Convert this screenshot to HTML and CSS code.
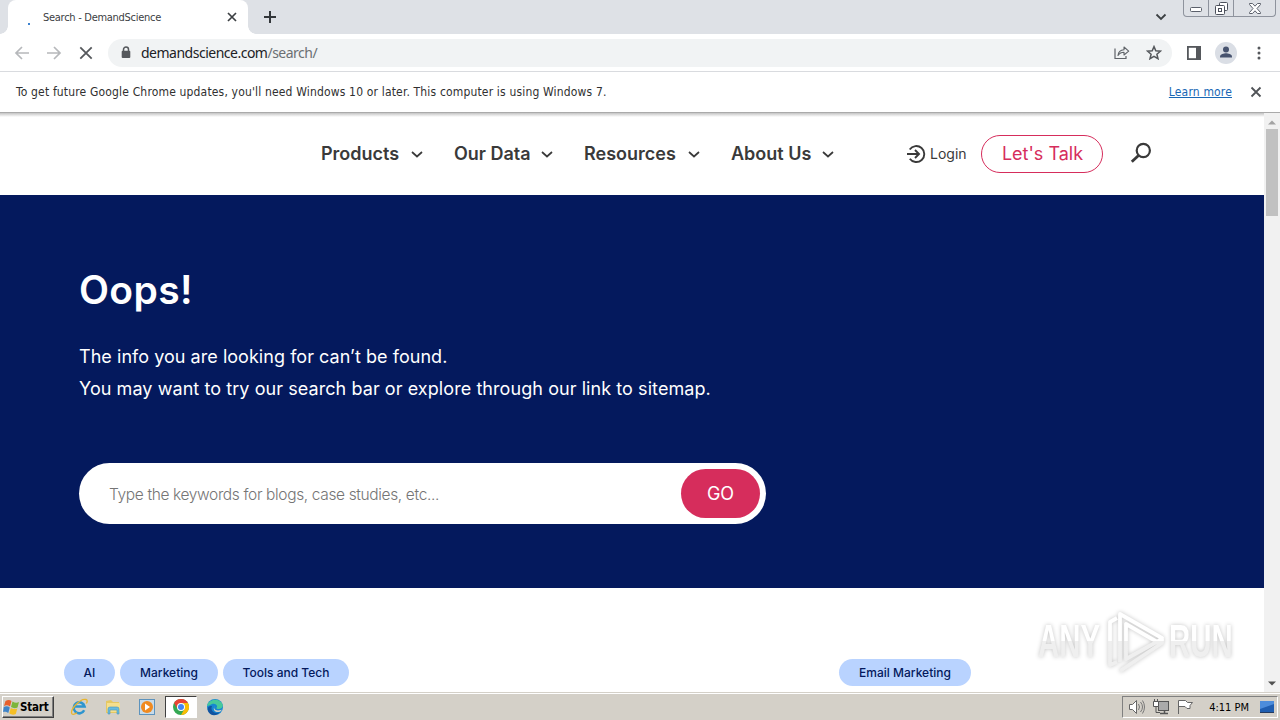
FILE: index.html
```html
<!DOCTYPE html>
<html lang="en">
<head>
    <meta charset="UTF-8">
    <meta name="viewport" content="width=device-width, initial-scale=1.0">
    <title>Search - DemandScience</title>
    <link rel="stylesheet" href="styles.css">
</head>
<body>
    <!-- Browser chrome -->
    <div class="tab-strip">
        <div class="tab-edge left"></div>
        <div class="tab">
            <span class="spinner"></span>
            <span class="tab-title">Search - DemandScience</span>
            <svg class="tab-close" width="10" height="10" viewBox="0 0 10 10"><path d="M1 1l8 8M9 1L1 9" stroke="#3c4043" stroke-width="1.7"/></svg>
        </div>
        <div class="tab-edge right"></div>
        <svg class="new-tab" width="14" height="14" viewBox="0 0 14 14"><path d="M7 1v12M1 7h12" stroke="#33373b" stroke-width="2"/></svg>
        <svg class="tab-search" width="12" height="8" viewBox="0 0 12 8"><path d="M1.5 1.5L6 6l4.5-4.5" fill="none" stroke="#3c4043" stroke-width="1.8"/></svg>
        <div class="window-buttons">
            <span class="win-min"><svg width="13" height="6" viewBox="0 0 13 6"><rect x=".5" y=".5" width="11" height="4" rx="1" fill="#fff" stroke="#5b606b"/></svg></span>
            <span class="win-max"><svg width="13" height="13" viewBox="0 0 13 13"><g fill="#fff" stroke="#4b505b"><rect x="4.5" y=".5" width="8" height="8" rx="1"/><rect x=".5" y="3.5" width="9" height="9" rx="1"/><rect x="3.5" y="6.5" width="3" height="3"/></g></svg></span>
            <span class="win-close"><svg width="12" height="11" viewBox="0 0 12 11"><path d="M.5.5h3L6 3.200 8.500.5h3v1L8 5.500l3.500 4v1h-3L6 7.800 3.500 10.500h-3v-1L4 5.500.5 1.500z" fill="#fff" stroke="#5b606b"/></svg></span>
        </div>
    </div>

    <div class="toolbar">
        <svg class="back" width="16" height="14" viewBox="0 0 16 14"><path d="M15 7H2M8 1L2 7l6 6" fill="none" stroke="#b6b8bb" stroke-width="1.7"/></svg>
        <svg class="forward" width="16" height="14" viewBox="0 0 16 14"><path d="M0 7h13M7 1l6 6-6 6" fill="none" stroke="#b6b8bb" stroke-width="1.7"/></svg>
        <svg class="stop" width="14" height="14" viewBox="0 0 14 14"><path d="M1.3 1.3l11.4 11.4M12.7 1.3L1.3 12.7" stroke="#55585c" stroke-width="1.8"/></svg>
        <div class="address-bar">
            <svg class="lock" width="10" height="13" viewBox="0 0 10 13"><path d="M2.5 6V3.500a2.500 2.500 0 015 0V6" fill="none" stroke="#55585c" stroke-width="1.5"/><rect x=".7" y="4.8" width="8.600" height="7.2" rx="1" fill="#55585c"/></svg>
            <span class="url">demandscience.com<span>/search/</span></span>
            <svg class="share" width="16" height="15" viewBox="0 0 16 15"><path d="M1 3.500v10h11V11" fill="none" stroke="#5f6368" stroke-width="1.2"/><path d="M4 10.500c.4-3.700 2.300-5.500 6-5.700V2l4.700 4.100L10 10V7.300c-2.700 0-4.500.9-6 3.200z" fill="none" stroke="#5f6368" stroke-width="1.1" stroke-linejoin="round"/></svg>
            <svg class="star" width="16" height="15" viewBox="0 0 16 15"><path d="M8 1.600l1.800 4.200 4.600.4-3.500 3 1.100 4.500L8 11.300l-4 2.400 1.100-4.500-3.500-3 4.600-.4z" fill="none" stroke="#55585c" stroke-width="1.5"/></svg>
        </div>
        <svg class="side-panel" width="14" height="14" viewBox="0 0 14 14"><rect x=".9" y=".9" width="12.2" height="12.2" fill="#fff" stroke="#55585c" stroke-width="1.8"/><path d="M9 1h4v12H9z" fill="#55585c"/></svg>
        <svg class="profile" width="22" height="22" viewBox="0 0 22 22"><circle cx="11" cy="11" r="11" fill="#dadee5"/><circle cx="11" cy="7.5" r="3" fill="#47536f"/><path d="M5 15.500v-1c0-2.300 4-3.200 6-3.200s6 .9 6 3.200v1z" fill="#47536f"/></svg>
        <svg class="menu" width="4" height="14" viewBox="0 0 4 14"><g fill="#55585c"><circle cx="2" cy="2" r="1.5"/><circle cx="2" cy="7" r="1.5"/><circle cx="2" cy="12" r="1.5"/></g></svg>
    </div>

    <div class="infobar">
        <span class="info-text">To get future Google Chrome updates, you'll need Windows 10 or later. This computer is using Windows 7.</span>
        <a class="learn-more">Learn more</a>
        <svg width="12" height="12" viewBox="0 0 12 12"><path d="M1.5 1.5l9 9M10.5 1.5l-9 9" stroke="#505357" stroke-width="1.8"/></svg>
    </div>

    <!-- Web page -->
    <div class="viewport">
        <div class="page">
            <header class="site-header">
                <nav class="main-nav">
                    <div class="nav-item products"><span>Products</span><svg width="12" height="7" viewBox="0 0 12 7"><path d="M1 1l5 4.500L11 1"/></svg></div>
                    <div class="nav-item data"><span>Our Data</span><svg width="12" height="7" viewBox="0 0 12 7"><path d="M1 1l5 4.500L11 1"/></svg></div>
                    <div class="nav-item resources"><span>Resources</span><svg width="12" height="7" viewBox="0 0 12 7"><path d="M1 1l5 4.500L11 1"/></svg></div>
                    <div class="nav-item about"><span>About Us</span><svg width="12" height="7" viewBox="0 0 12 7"><path d="M1 1l5 4.500L11 1"/></svg></div>
                </nav>
                <div class="login">
                    <svg width="19" height="20" viewBox="0 0 19 20"><path d="M2.700 5.500a8 8 0 11.1 9.200M0 10h12M8 6l4 4-4 4" fill="none" stroke="#3a3a3a" stroke-width="1.9"/></svg>
                    <span>Login</span>
                </div>
                <button class="talk-btn">Let's Talk</button>
                <svg class="search-icon" width="22" height="22" viewBox="0 0 22 22"><circle cx="13.3" cy="8.5" r="6.6" fill="none" stroke="#3a3a3a" stroke-width="2.2"/><path d="M8.500 13.500l-6.700 6.300" stroke="#3a3a3a" stroke-width="2.8"/></svg>
            </header>

            <section class="hero">
                <h1>Oops!</h1>
                <p class="line-one">The info you are looking for can’t be found.</p>
                <p class="line-two">You may want to try our search bar or explore through our link to sitemap.</p>
                <form class="search-form">
                    <input type="text" placeholder="Type the keywords for blogs, case studies, etc...">
                    <button type="button">GO</button>
                </form>
            </section>

            <section class="cards">
                <div class="tags">
                    <span class="tag tag-ai">AI</span>
                    <span class="tag tag-marketing">Marketing</span>
                    <span class="tag tag-tools">Tools and Tech</span>
                </div>
                <div class="tags">
                    <span class="tag tag-email">Email Marketing</span>
                </div>
            </section>

            <div class="watermark">
                <span>ANY</span>
                <svg width="60" height="66" viewBox="0 0 60 66">
                    <defs>
                        <linearGradient id="fade" gradientUnits="userSpaceOnUse" x1="0" y1="0" x2="0" y2="66">
                            <stop offset=".5" stop-color="#fff"/>
                            <stop offset=".5" stop-color="#efefef"/>
                        </linearGradient>
                    </defs>
                    <g fill="none" stroke="url(#fade)" stroke-width="3.8" stroke-linejoin="round"><path d="M11 10l-7 4v43l7-3"/><path d="M14 54V6l42 24-3 5-33-19v35l36-20v4L14 63"/></g>
                </svg>
                <span>RUN</span>
            </div>
        </div>
        <div class="scrollbar">
            <svg width="8" height="5" viewBox="0 0 8 5"><path d="M0 4.500L4 .5l4 4z" fill="#a3a3a3"/></svg>
            <div class="thumb"></div>
            <svg class="down" width="8" height="5" viewBox="0 0 8 5"><path d="M0 .5l4 4 4-4z" fill="#505050"/></svg>
        </div>
    </div>

    <div class="taskbar">
        <div class="start">
            <svg width="17" height="16" viewBox="0 0 17 16"><path d="M2.500 2C5 .5 7 1 8.500 2L7 7.500C5 6 3 6 1 7z" fill="#e8602c"/><path d="M9.500 2.500C12 4 14 4 16 3l-1.500 5.500c-2 1-4.500.8-6.500-.5z" fill="#7db53a"/><path d="M.8 8C3 7 5 7 6.800 8.500L5.300 14C3.500 12.500 1.500 12.500 0 13z" fill="#3f84c8"/><path d="M7.800 9c2 1.300 4.500 1.300 6.500.5L12.800 15c-2 1-4.500.8-6.500-.5z" fill="#f5bf25"/></svg>
            <span>Start</span>
        </div>
        <div class="quick-launch">
            <svg width="18" height="18" viewBox="0 0 18 18"><path d="M14.200 12.300a5.500 5.500 0 11.400-3.800H4" fill="none" stroke="#2d95cf" stroke-width="2.5"/><path d="M2 16C-.5 12 10 0 16 1.500c2 .5 1 3 .3 4M2 16c1.500 1 4-.5 5-1.200" fill="none" stroke="#e8b52e" stroke-width="1.3"/></svg>
            <svg width="18" height="18" viewBox="0 0 18 18"><path d="M2 3l5-1 2 2h6v11H2z" fill="#e5c862"/><path d="M3 5h13v9H3z" fill="#f5df8d"/><path d="M4 16v-5q0-2 2-2h7q2 0 2 2v5h-2v-4H6v4z" fill="#67bce0" stroke="#4995b5" stroke-width=".6"/></svg>
            <svg width="18" height="18" viewBox="0 0 18 18"><rect x="1.5" y="1.5" width="15" height="15" fill="#c8dbe9" stroke="#5d93bd"/><circle cx="9" cy="9" r="6" fill="#f08a20"/><path d="M7 5.500l5 3.500-5 3.500z" fill="#fff"/></svg>
            <span class="active-app"><svg width="16" height="16" viewBox="0 0 16 16"><circle cx="8" cy="8" r="8" fill="#34a853"/><path d="M1.070 4A8 8 0 0114.930 4H8a4 4 0 00-3.464 6z" fill="#ea4335"/><path d="M14.930 4A8 8 0 018 16l3.464-6A4 4 0 008 4z" fill="#fbbc04"/><circle cx="8" cy="8" r="4" fill="#fff"/><circle cx="8" cy="8" r="3" fill="#4285f4"/></svg></span>
            <svg width="18" height="18" viewBox="0 0 18 18"><circle cx="9" cy="9" r="8" fill="#1686d1"/><path d="M1 8C2 1 13-1 16.500 6c1 3-1 5-4 5-2 0-2.500-1-1.500-2 .5-3-3-4-5-3S2 8 1 8z" fill="#47c99b"/><path d="M6 8c-2 4 2 9 8 6-2 3-6 4-9 2.500C0 13 1 7 6 8z" fill="#1254a0"/><path d="M9 7.500c-2 2-.5 5 3 5l4-.8-2 2c-5 1.500-8-2-5-6.200z" fill="#d4d0c8"/></svg>
        </div>
        <div class="tray">
            <svg width="18" height="16" viewBox="0 0 18 16"><path d="M1.500 5.500h3l4-4v13l-4-4h-3z" fill="#fff" stroke="#666"/><path d="M10.500 5q2 3 0 6M12.500 3q4 5 0 10M14.500 1.500q4 6.500 0 13" fill="none" stroke="#777"/></svg>
            <svg width="17" height="16" viewBox="0 0 17 16"><rect x="5.500" y="2.500" width="10" height="9" fill="#aaa" stroke="#555"/><path d="M7 14.500h8M11.500 12v2" stroke="#555" stroke-width="1.5"/><path d="M1.500 0v3M4.500 0v3M3 8v5.500h4" fill="none" stroke="#555"/><path d="M.5 2.500h5v5h-5z" fill="#fff" stroke="#555"/></svg>
            <svg width="17" height="16" viewBox="0 0 17 16"><path d="M1.500 15V1.500h7l2 2h5l-2.500 3v3h-3l-2-2H2" fill="#fff" stroke="#666"/></svg>
            <span class="clock">4:11 PM</span>
            <svg width="16" height="14" viewBox="0 0 16 14"><rect x="1" y="1" width="14" height="11" fill="#205eb0"/><path d="M1 1h14v3L1 9z" fill="#4d8ddb"/><path d="M1 12.500h14" stroke="#253b60"/></svg>
        </div>
    </div>
</body>
</html>
```
FILE: styles.css
```css
:root {
    --navy: #04195d;
    --pink: #d62d5c;
    --ui: "DejaVu Sans Condensed", "DejaVu Sans", sans-serif;
}

* {
    box-sizing: border-box;
}

body {
    margin: 0;
    width: 1280px;
    height: 720px;
    overflow: hidden;
    display: flex;
    flex-direction: column;
    background: #fff;
    font-family: "Inter", sans-serif;
}

svg {
    display: block;
    flex: none;
}

span, a {
    white-space: nowrap;
}

/* Tab strip */
.tab-strip {
    height: 34px;
    flex: none;
    display: flex;
    background: #dee1e6;
    font-family: var(--ui);
}

.tab-edge {
    width: 8px;
}

.tab-edge.left {
    background: radial-gradient(circle at 0 0, transparent 7.5px, #fff 8px) 0 26px / 8px 8px no-repeat;
}

.tab-edge.right {
    background: radial-gradient(circle at 8px 0, transparent 7.5px, #fff 8px) 0 26px / 8px 8px no-repeat;
}

.tab {
    width: 240px;
    display: flex;
    align-items: center;
    background: #fff;
    border-radius: 8px 8px 0 0;
}

.spinner {
    width: 2px;
    height: 2px;
    margin: 14px 13px 0 20px;
    background: #3c82cf;
}

.tab-title {
    width: 184px;
    font-size: 11px;
    letter-spacing: -0.28px;
    color: #3c4043;
}

.tab-close {
    margin-right: 11px;
}

.new-tab {
    margin: 10px 0 0 7px;
}

.tab-search {
    margin: 13px 16px 0 auto;
}

.window-buttons {
    width: 93px;
    height: 17px;
    margin-right: 4px;
    display: flex;
    border: 1px solid #8e939d;
    border-top: 0;
    border-radius: 0 0 4px 4px;
}

.window-buttons span {
    display: flex;
    align-items: center;
    justify-content: center;
    border-right: 1px solid #8e939d;
}

.window-buttons .win-min {
    width: 25px;
    padding-top: 4px;
}

.window-buttons .win-max {
    width: 25px;
    padding-top: 1px;
}

.window-buttons .win-close {
    width: 41px;
    border: 0;
}

/* Toolbar */
.toolbar {
    height: 38px;
    flex: none;
    display: flex;
    align-items: center;
    padding-left: 14px;
    border-bottom: 1px solid #d9dbdf;
}

.forward {
    margin-left: 17px;
}

.stop {
    margin-left: 16px;
}

.address-bar {
    width: 1064px;
    height: 28px;
    margin-left: 15px;
    padding: 0 10px 0 13px;
    display: flex;
    align-items: center;
    border-radius: 14px;
    background: #f1f3f4;
}

.url {
    margin-left: 10px;
    font-family: "Noto Sans", sans-serif;
    font-size: 14px;
    letter-spacing: -0.5px;
    color: #202124;
}

.url span {
    color: #6b6f73;
}

.share {
    margin-left: auto;
}

.star {
    margin-left: 16px;
}

.side-panel {
    margin-left: 15px;
}

.profile {
    margin-left: 14px;
}

.menu {
    margin-left: 20px;
}

/* Update notice */
.infobar {
    height: 41px;
    flex: none;
    display: flex;
    align-items: center;
    padding: 0 18px 0 16px;
    border-bottom: 1px solid #aaa;
    font-family: var(--ui);
    font-size: 12px;
    letter-spacing: 0.165px;
    color: #303030;
}

.learn-more {
    margin-left: auto;
    margin-right: 18px;
    color: #1967b5;
    text-decoration: underline;
}

/* Page */
.viewport {
    height: 579px;
    flex: none;
    display: flex;
    background: linear-gradient(#c4c4c4, #fff 4px);
}

.page {
    width: 1264px;
    position: relative;
}

.site-header {
    height: 82px;
    display: flex;
    align-items: center;
    padding-left: 321px;
    color: #3a3a3a;
}

.main-nav {
    display: flex;
    gap: 31px;
}

.nav-item {
    display: flex;
    align-items: center;
    justify-content: space-between;
    font-size: 18px;
    font-weight: 600;
}

.nav-item span {
    padding-bottom: 1px;
}

.products {
    width: 102px;
}

.data {
    width: 99px;
}

.resources {
    width: 116px;
}

.about {
    width: 103px;
}

.nav-item path {
    fill: none;
    stroke: #3a3a3a;
    stroke-width: 1.7;
}

.login {
    width: 74px;
    margin-left: 73px;
    display: flex;
    align-items: center;
    gap: 4px;
    font-size: 14px;
}

.login span {
    padding-bottom: 1px;
}

.talk-btn {
    width: 122px;
    height: 38px;
    padding: 0 0 1px 1px;
    border: 1px solid var(--pink);
    border-radius: 19px;
    background: #fff;
    color: var(--pink);
    font: 18px "Inter", sans-serif;
}

.search-icon {
    margin: 0 0 2px 27px;
}

.hero {
    height: 393px;
    padding: 72px 79px 0;
    background: var(--navy);
    color: #fff;
}

.hero h1 {
    margin: 0;
    font-size: 39px;
    line-height: 46px;
    font-weight: 600;
    letter-spacing: 0.4px;
}

.hero p {
    margin: 0;
    font-size: 18px;
    line-height: 32px;
    letter-spacing: 0.07px;
}

.hero .line-one {
    margin-top: 28px;
    letter-spacing: 0.04px;
}

.search-form {
    width: 687px;
    height: 61px;
    margin-top: 58px;
    padding: 6px 6px 6px 30px;
    display: flex;
    background: #fff;
    border-radius: 31px;
}

.search-form input {
    flex: 1;
    padding: 1px 0 0;
    border: 0;
    outline: none;
    font: 300 15.5px "Inter", sans-serif;
    letter-spacing: -0.36px;
}

.search-form input::placeholder {
    color: #757575;
}

.search-form button {
    width: 79px;
    height: 49px;
    padding: 0;
    border: 0;
    border-radius: 25px;
    background: var(--pink);
    color: #fff;
    font: 18px "Inter", sans-serif;
}

.cards {
    display: grid;
    grid-template-columns: 775px 1fr;
    padding: 71px 0 0 64px;
}

.tags {
    display: flex;
    gap: 5px;
}

.tag {
    height: 27px;
    border-radius: 14px;
    background: #b9d3ff;
    color: var(--navy);
    font-size: 12px;
    font-weight: 500;
    line-height: 27px;
    text-align: center;
}

.tag-ai {
    width: 51px;
}

.tag-marketing {
    width: 98px;
}

.tag-tools {
    width: 126px;
}

.tag-email {
    width: 132px;
}

.watermark {
    position: absolute;
    left: 1038px;
    top: 495px;
    height: 66px;
    display: flex;
    align-items: center;
    font-family: "Liberation Sans", sans-serif;
    font-size: 46px;
    font-weight: bold;
    filter: drop-shadow(0 0 2px #c4c4c4);
}

.watermark span {
    width: 102px;
    margin-right: -36px;
    transform: scaleX(.64);
    transform-origin: left;
    background: linear-gradient(#fff 50%, #efefef 50%);
    -webkit-background-clip: text;
    background-clip: text;
    color: transparent;
}

.watermark svg {
    margin: 0 3px 0 2px;
}

.scrollbar {
    width: 16px;
    padding-top: 7px;
    display: flex;
    flex-direction: column;
    align-items: center;
    background: #f1f1f1;
}

.thumb {
    width: 12px;
    height: 87px;
    margin-top: 4px;
    background: #c1c1c1;
}

.down {
    margin: auto 0 6px;
}

/* Taskbar */
.taskbar {
    height: 28px;
    flex: none;
    display: flex;
    align-items: center;
    padding: 1px 2px 0;
    background: #d4d0c8;
    border-top: 1px solid #d4d0c8;
    box-shadow: inset 0 1px #fff;
    font-family: var(--ui);
    color: #000;
}

.start {
    width: 52px;
    height: 22px;
    display: flex;
    align-items: center;
    border: 1px solid;
    border-color: #fff #404040 #404040 #fff;
    box-shadow: inset -1px -1px #808080;
    font-size: 11.5px;
    font-weight: bold;
    letter-spacing: -0.2px;
}

.quick-launch {
    margin-left: 16px;
    display: flex;
    align-items: center;
    gap: 16px;
}

.active-app {
    width: 32px;
    height: 22px;
    margin: 0 -7px 0 -7px;
    display: flex;
    align-items: center;
    justify-content: center;
    background: #fff;
    border: 1px solid;
    border-color: #404040 #fff #fff #404040;
}

.tray {
    width: 156px;
    height: 22px;
    margin-left: auto;
    padding: 0 2px 0 5px;
    display: flex;
    align-items: center;
    gap: 7px;
    border: 1px solid;
    border-color: #808080 #fff #fff #808080;
    font-size: 11px;
}

.clock {
    margin-left: auto;
    margin-right: 3px;
}
```
